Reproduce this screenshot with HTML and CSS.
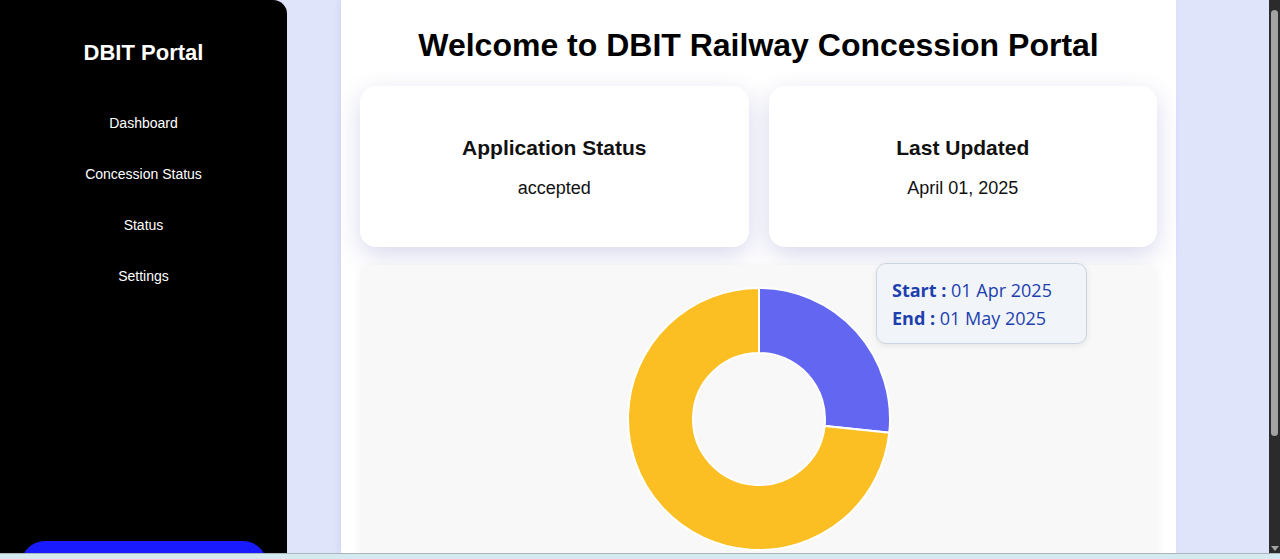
FILE: index.html
```html
<!DOCTYPE html>
<html lang="en">
<head>
<meta charset="utf-8">
<title>DBIT Portal</title>
<link rel="stylesheet" href="styles.css">
</head>
<body>
<div class="screen">
  <aside class="sidebar">
    <h2 class="brand">DBIT Portal</h2>
    <nav class="nav">
      <a class="nav-item">Dashboard</a>
      <a class="nav-item">Concession Status</a>
      <a class="nav-item">Status</a>
      <a class="nav-item">Settings</a>
    </nav>
    <div class="spacer"></div>
    <button class="logout"></button>
  </aside>
  <div class="stage">
    <main class="content">
      <h1 class="title">Welcome to DBIT Railway Concession Portal</h1>
      <section class="cards">
        <div class="card">
          <h3 class="card-title">Application Status</h3>
          <p class="card-value">accepted</p>
        </div>
        <div class="card">
          <h3 class="card-title">Last Updated</h3>
          <p class="card-value">April 01, 2025</p>
        </div>
      </section>
      <section class="chart-panel">
        <svg class="donut" width="264" height="264" viewBox="-1 -1 264 264">
          <path class="seg-blue" d="M131,0 A131,131 0 0 1 261.28,144.69 L196.64,137.9 A66,66 0 0 0 131,65 Z"/>
          <path class="seg-yellow" d="M261.28,144.69 A131,131 0 1 1 131,0 L131,65 A66,66 0 1 0 196.64,137.9 Z"/>
        </svg>
        <div class="tooltip">
          <div class="tip-line"><b>Start :</b> 01 Apr 2025</div>
          <div class="tip-line"><b>End :</b> 01 May 2025</div>
        </div>
      </section>
    </main>
  </div>
  <div class="scrollbar">
    <div class="thumb"></div>
    <div class="spacer"></div>
    <div class="arrow"></div>
  </div>
</div>
<div class="taskbar"></div>
</body>
</html>
```
FILE: styles.css
```css
* { box-sizing: border-box; }
html, body {
  margin: 0;
  height: 559px;
  overflow: hidden;
}
body {
  font-family: "Liberation Sans", Arial, sans-serif;
  display: flex;
  flex-direction: column;
  background: #e0e4fb;
}
.screen {
  display: flex;
  height: 553px;
  overflow: hidden;
}
.sidebar {
  width: 287px;
  flex: none;
  background: #000;
  color: #fff;
  border-top-right-radius: 14px;
  display: flex;
  flex-direction: column;
  align-items: center;
  padding-top: 40px;
}
.brand {
  margin: 0;
  font-size: 22px;
  font-weight: bold;
  line-height: 26px;
}
.nav {
  display: flex;
  flex-direction: column;
  align-items: center;
  gap: 34px;
  margin-top: 49px;
}
.nav-item {
  font-size: 14px;
  line-height: 17px;
  color: #fff;
}
.spacer { flex: 1; }
.logout {
  width: 246px;
  height: 24px;
  margin-bottom: -12px;
  border: none;
  border-radius: 24px 24px 0 0;
  background: #1a1aff;
  flex: none;
}
.stage {
  flex: 1;
  display: flex;
  padding-left: 54px;
}
.content {
  width: 835px;
  background: #fff;
  padding: 20px 19px 0 19px;
  box-shadow: -2px 0 6px rgba(120, 130, 200, 0.15);
}
.title {
  margin: 0;
  text-align: center;
  font-size: 32px;
  font-weight: bold;
  line-height: 50px;
  color: #000;
}
.cards {
  display: grid;
  grid-template-columns: 1fr 1fr;
  gap: 20px;
  margin-top: 16px;
}
.card {
  height: 161px;
  background: #fff;
  border-radius: 16px;
  box-shadow: 0 8px 24px rgba(90, 95, 180, 0.24);
  display: flex;
  flex-direction: column;
  align-items: center;
  padding-top: 49px;
  color: #111;
}
.card-title {
  margin: 0;
  font-size: 21px;
  font-weight: bold;
  line-height: 25px;
}
.card-value {
  margin: 18px 0 0;
  font-size: 18px;
  line-height: 20px;
}
.chart-panel {
  position: relative;
  margin-top: 18px;
  height: 320px;
  background: #f8f8f8;
  border-radius: 12px;
  box-shadow: 0 2px 10px rgba(0, 0, 0, 0.06);
  display: flex;
  justify-content: center;
  padding-top: 22px;
}
.donut { display: block; }
.seg-blue { fill: #6366f1; stroke: #fff; stroke-width: 2; }
.seg-yellow { fill: #fbbf24; stroke: #fff; stroke-width: 2; }
.tooltip {
  position: absolute;
  left: 516px;
  top: -2px;
  width: 211px;
  height: 81px;
  background: #f1f5f9;
  border: 1px solid #cbd5e1;
  border-radius: 10px;
  box-shadow: 0 2px 6px rgba(0, 0, 0, 0.08);
  padding: 12px 0 0 15px;
  font-family: "Open Sans", "Noto Sans", sans-serif;
  font-size: 18px;
  color: #1e40af;
}
.tip-line {
  line-height: 28px;
  white-space: nowrap;
}
.tip-line b { font-weight: 700; }
.scrollbar {
  width: 11px;
  flex: none;
  background: #2b2b2b;
  display: flex;
  flex-direction: column;
  align-items: center;
  padding: 10px 0 2px;
}
.thumb {
  width: 7px;
  height: 426px;
  background: #a3a3a3;
  border-radius: 4px;
}
.arrow {
  width: 0;
  height: 0;
  border-left: 4px solid transparent;
  border-right: 4px solid transparent;
  border-top: 5px solid #a3a3a3;
}
.taskbar {
  height: 6px;
  background: #d5eaf0;
  border-top: 1px solid #a9b7bd;
}
```
